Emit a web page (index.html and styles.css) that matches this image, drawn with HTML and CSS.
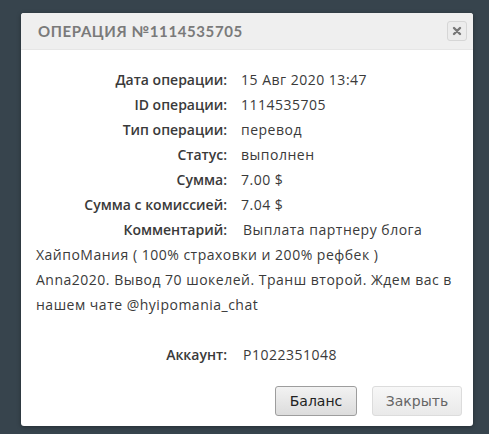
FILE: index.html
```html
<!DOCTYPE html>
<html lang="ru">
<head>
<meta charset="utf-8">
<link rel="stylesheet" href="styles.css">
</head>
<body>
<div class="dialog">
  <div class="dialog-header">
    <h1 class="dialog-title">Операция №1114535705</h1>
    <button class="close-btn" aria-label="close">
      <svg width="10" height="10" viewBox="0 0 10 10"><path d="M2 2 L8 8 M8 2 L2 8" stroke="#777" stroke-width="2.4" stroke-linecap="round"/></svg>
    </button>
  </div>
  <div class="dialog-body">
    <div class="row"><span class="label">Дата операции:</span><span class="value">15 Авг 2020 13:47</span></div>
    <div class="row"><span class="label">ID операции:</span><span class="value">1114535705</span></div>
    <div class="row"><span class="label">Тип операции:</span><span class="value">перевод</span></div>
    <div class="row"><span class="label">Статус:</span><span class="value">выполнен</span></div>
    <div class="row"><span class="label">Сумма:</span><span class="value">7.00 $</span></div>
    <div class="row"><span class="label">Сумма с комиссией:</span><span class="value">7.04 $</span></div>
    <div class="row"><span class="label">Комментарий:</span><span class="value comment">Выплата партнеру блога</span></div>
    <p class="comment-rest">ХайпоМания ( 100% страховки и 200% рефбек )<br>Anna2020. Вывод 70 шокелей. Транш второй. Ждем вас в<br>нашем чате @hyipomania_chat</p>
    <div class="row spaced"><span class="label">Аккаунт:</span><span class="value comment">P1022351048</span></div>
  </div>
  <div class="dialog-footer">
    <button class="btn btn-primary">Баланс</button>
    <button class="btn btn-light">Закрыть</button>
  </div>
</div>
</body>
</html>
```

FILE: styles.css
```css
html, body {
  margin: 0;
  padding: 0;
  background: #37444d;
  height: 100%;
}
body {
  padding: 13px 16px 0 21px;
  box-sizing: border-box;
}
.dialog {
  width: 452px;
  height: 413px;
  background: #fff;
  border-radius: 3px;
  box-shadow: 0 1px 4px rgba(0,0,0,0.35);
  display: flex;
  flex-direction: column;
  overflow: hidden;
}
.dialog-header {
  height: 37px;
  background: #efefef;
  border-bottom: 1px solid #e6e6e6;
  display: flex;
  align-items: center;
  justify-content: space-between;
  padding: 0 6px 0 17px;
  box-sizing: border-box;
}
.dialog-title {
  margin: 0;
  font-family: "Lato", sans-serif;
  font-weight: 700;
  font-size: 15px;
  letter-spacing: 0.6px;
  color: #7a7a7a;
  text-transform: uppercase;
}
.close-btn {
  width: 20px;
  height: 20px;
  padding: 0;
  border: 1px solid #d6d6d6;
  border-radius: 3px;
  background: #ececec;
  display: flex;
  align-items: center;
  justify-content: center;
}
.dialog-body {
  padding: 17px 0 0 15px;
  font-family: "Open Sans", sans-serif;
  font-size: 14px;
  letter-spacing: 0.5px;
  line-height: 25px;
  color: #333;
  flex: 1;
}
.row {
  display: block;
}
.label {
  display: inline-block;
  width: 191px;
  text-align: right;
  font-weight: 600;
  letter-spacing: 0;
  color: #3a3a3a;
}
.value {
  margin-left: 14px;
  color: #3a3a3a;
}
.value.comment {
  margin-left: 16px;
}
.comment-rest {
  margin: 0;
  color: #3a3a3a;
}
.spaced {
  margin-top: 25px;
}
.dialog-footer {
  display: flex;
  justify-content: flex-end;
  gap: 15px;
  padding: 0 11px 10px 0;
}
.btn {
  height: 30px;
  border-radius: 3px;
  font-family: "DejaVu Sans", sans-serif;
  font-size: 14px;
  padding: 0;
}
.btn-primary {
  width: 82px;
  border: 1px solid #9d9d9d;
  background: linear-gradient(#f2f2f2, #dcdcdc);
  color: #222;
}
.btn-light {
  width: 90px;
  border: 1px solid #dcdcdc;
  background: linear-gradient(#f7f7f7, #e9e9e9);
  color: #666;
}
```
